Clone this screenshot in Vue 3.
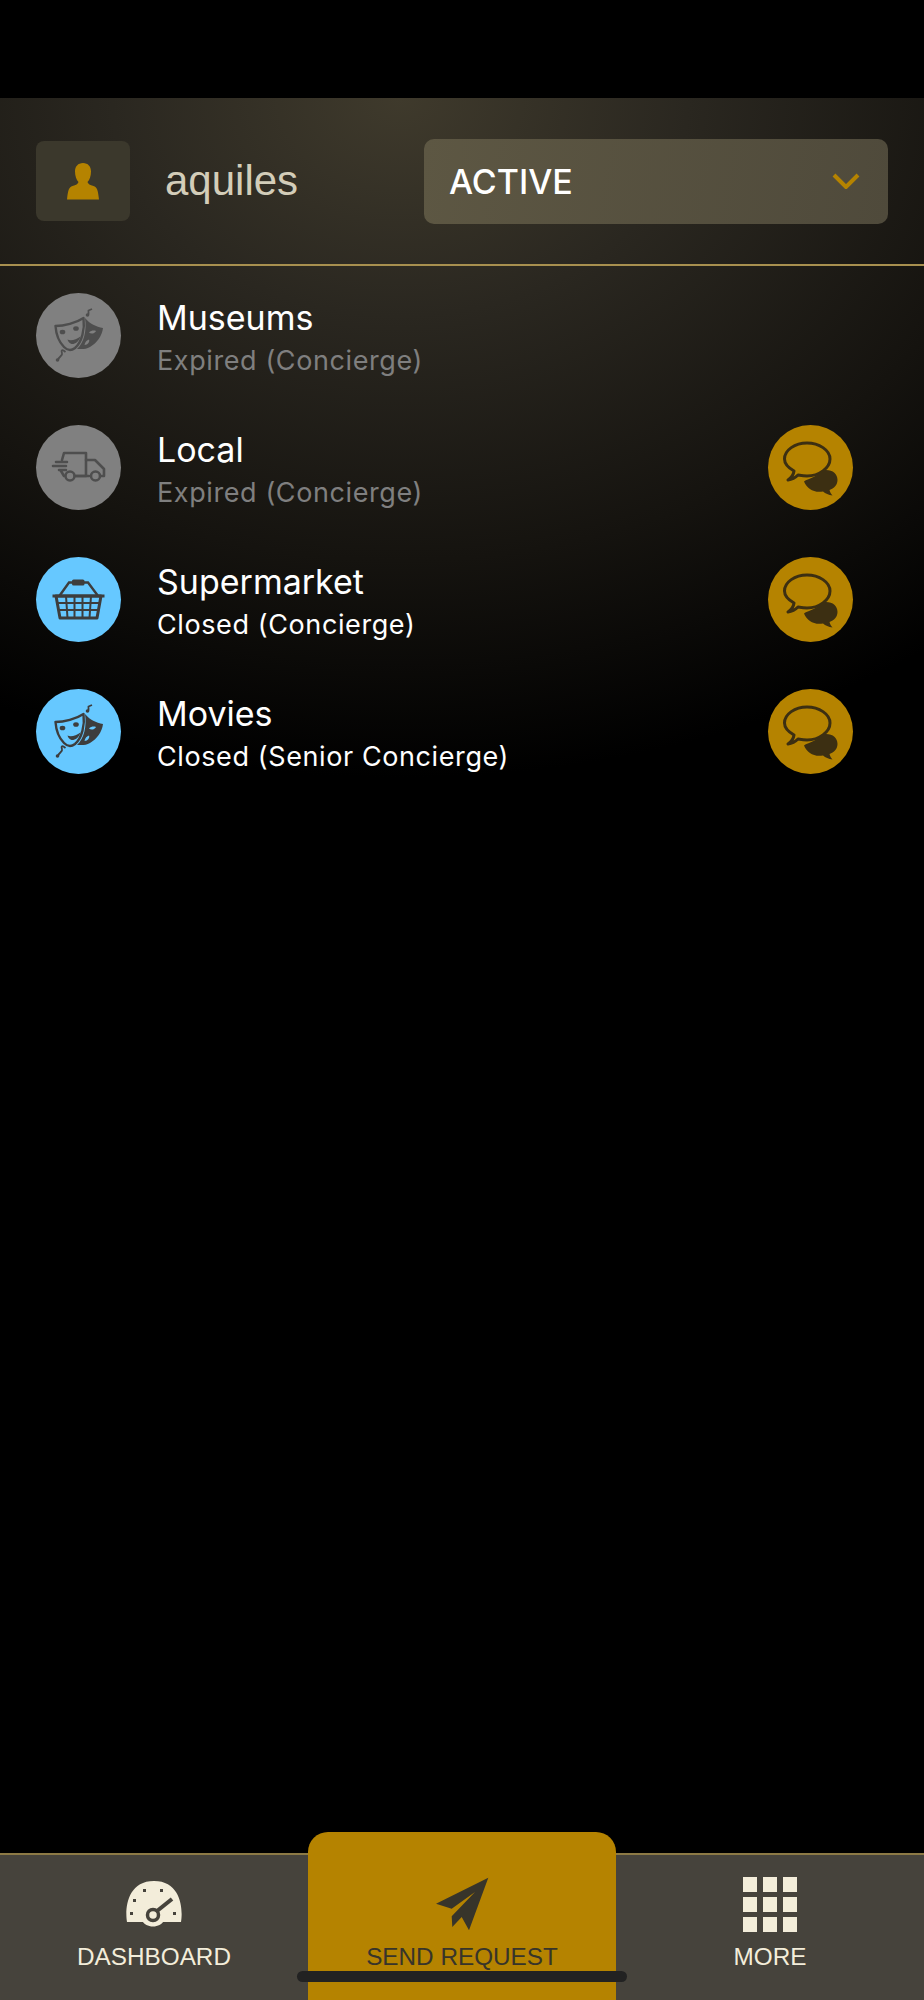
<template>
  <div class="screen">
    <svg class="defs" width="0" height="0" aria-hidden="true">
      <defs>
        <symbol id="ic-masks" viewBox="0 0 85 85">
          <path d="M19.500 33C28 33 40 30 47.500 25C49 36 46 49 39 55C35 58 31 57 28 54C22 48 20 40 19.500 33Z" fill="none" stroke="currentColor" stroke-width="2.400" stroke-linejoin="round" />
          <ellipse cx="26.500" cy="39" rx="2.800" ry="2.300" fill="currentColor" />
          <ellipse cx="40" cy="35.500" rx="2.800" ry="2.300" fill="currentColor" />
          <path d="M31.500 46.500C34.500 48 40 47 44.500 43.500C43 49 38.500 51.500 35.500 51C33.500 50.500 32 48.500 31.500 46.500Z" fill="currentColor" />
          <path fill-rule="evenodd" fill="currentColor" d="M49 25C54 31 60 33.500 67 35C66 43 61 50 54 54C50 56.500 46 56 41 56C48 50 51 37 49 25ZM53 39.500C55 37.500 58 37 60 38C59 40.500 55 41.500 53 39.500ZM48.500 52C49 49 51 47 53 46.500C54 48.500 52 52 48.500 52Z" />
          <path d="M52.500 21.500V17.500L56 16" fill="none" stroke="currentColor" stroke-width="1.800" />
          <circle cx="51.500" cy="22" r="1.800" fill="currentColor" />
          <path d="M22 67C23 63 27 63 26 60C25 57 26 56 29.500 59" fill="none" stroke="currentColor" stroke-width="1.800" />
          <circle cx="21.500" cy="67" r="1.800" fill="currentColor" />
        </symbol>
        <symbol id="ic-truck" viewBox="0 0 85 85">
          <g fill="none" stroke="currentColor" stroke-width="2.600" stroke-linejoin="round" stroke-linecap="round">
            <path d="M26 35L28 28H50V51H39" />
            <path d="M28 51L25 46" />
            <path d="M50 35H59L68 44V51H65" />
            <path d="M53 51H40" />
            <path d="M17 41H30M20 37H31M23 45H30" />
            <circle cx="34" cy="51" r="4.500" />
            <circle cx="59.500" cy="51" r="4.500" />
          </g>
        </symbol>
        <symbol id="ic-basket" viewBox="0 0 85 85">
          <g fill="none" stroke="currentColor">
            <path d="M23.700 38.500L33 25.500H52L61.700 38.500" stroke-width="2.400" />
            <path d="M20 39H65L61 61H24Z" stroke-width="3" stroke-linejoin="round" />
            <path d="M16.500 39H68.500" stroke-width="3" />
            <path d="M21 46H64M22 53H63M30 39L31.500 61M38.500 39V61M46.500 39V61M55 39L53.500 61" stroke-width="2" />
          </g>
          <rect x="36" y="22.500" width="12.500" height="6" rx="1.600" fill="currentColor" />
        </symbol>
        <symbol id="ic-chat" viewBox="0 0 85 85">
          <path d="M26 46C19 42 16.500 38 16.500 34C16.500 25 27 18 39 18C51 18 62 25 62 34C62 43 51 51 39 51C36 51 33 50.500 30 50C27 53 24 54.500 20 55C23 53 25.500 50 26 46Z" fill="none" stroke="currentColor" stroke-width="3" stroke-linejoin="round" />
          <path d="M36 56.500C39 54 47 53 52 47C54 45 56 45 58 45C65 45 69.500 49 69.500 55C69.500 60 66 63.500 61.500 65C62 67 63 69 64.500 70.500C60.500 70 57.500 68.500 55 66.500C46 68 39 64 36 56.500Z" fill="currentColor" />
        </symbol>
      </defs>
    </svg>

    <div class="status-bar"></div>

    <main class="main">
      <header class="top">
        <div class="avatar">
          <svg width="32" height="37" viewBox="0 0 32 37">
            <path fill="currentColor" d="M16 0C11 0 8 3.500 8 8.500C8 13 9.500 17 11.500 19C11 21 9 22 5.500 23C2 24 1 27 0 36.500H32C31 27 30 24 26.500 23C23 22 21 21 20.500 19C22.500 17 24 13 24 8.500C24 3.500 21 0 16 0Z" />
          </svg>
        </div>
        <span class="username">aquiles</span>
        <div class="select">
          <span>ACTIVE</span>
          <svg width="28" height="16" viewBox="0 0 28 16">
            <path d="M2 2L14 14L26 2" fill="none" stroke="currentColor" stroke-width="4" />
          </svg>
        </div>
      </header>

      <ul class="list">
        <li v-for="item in items" :key="item.name" class="row" :class="{ expired: item.expired }">
          <div class="circle">
            <svg width="85" height="85"><use :href="'#' + item.icon" /></svg>
          </div>
          <div class="info">
            <div class="name">{{ item.name }}</div>
            <div class="sub">{{ item.status }}</div>
          </div>
          <button v-if="item.chat" class="chat">
            <svg width="85" height="85"><use href="#ic-chat" /></svg>
          </button>
        </li>
      </ul>
    </main>

    <nav class="tabbar">
      <div class="tab">
        <svg class="tab-icon" width="56" height="46" viewBox="0 0 56 46">
          <path fill="currentColor" d="M1 41C-1 30 0 0 28 0C56 0 57 30 55 41L37 41C36 43 32 45.500 27 45.500C22 45.500 18 43 17 41Z" />
          <g fill="#46433c">
            <rect x="17" y="8" width="3" height="3" />
            <rect x="34" y="8" width="3" height="3" />
            <rect x="7" y="18" width="3" height="3" />
            <rect x="4" y="31" width="3" height="3" />
            <rect x="47" y="31" width="3" height="3" />
          </g>
          <circle cx="27" cy="34" r="5.500" fill="none" stroke="#46433c" stroke-width="3.500" />
          <path d="M31 30L46 18" stroke="#46433c" stroke-width="4" />
        </svg>
        <span>DASHBOARD</span>
      </div>
      <div class="tab send">
        <svg class="tab-icon" width="53" height="54" viewBox="0 0 53 54">
          <path fill="currentColor" d="M52.300 0.700L0 26.700L15.700 31.700L39 15L15.700 39.300L16.300 50L25.700 40L33 53.300Z" />
        </svg>
        <span>SEND REQUEST</span>
      </div>
      <div class="tab">
        <div class="tab-icon dots">
          <i v-for="n in 9" :key="n"></i>
        </div>
        <span>MORE</span>
      </div>
    </nav>

    <div class="home-bar"></div>
  </div>
</template>

<script setup>
const items = [
  { name: 'Museums', status: 'Expired (Concierge)', icon: 'ic-masks', expired: true, chat: false },
  { name: 'Local', status: 'Expired (Concierge)', icon: 'ic-truck', expired: true, chat: true },
  { name: 'Supermarket', status: 'Closed (Concierge)', icon: 'ic-basket', expired: false, chat: true },
  { name: 'Movies', status: 'Closed (Senior Concierge)', icon: 'ic-masks', expired: false, chat: true },
]
</script>

<style>
html, body { background: #000; }
</style>

<style scoped>
.screen {
  position: relative;
  display: flex;
  flex-direction: column;
  width: 924px;
  height: 2000px;
  overflow: hidden;
  background: #000;
  font-family: "Liberation Sans", Arial, sans-serif;
}
.defs { position: absolute; }
.status-bar { height: 98px; flex: none; }

.main {
  flex: 1;
  background:
    radial-gradient(ellipse 900px 680px at 400px 0, #3f3a2c, #2a2720 32%, #15130f 68%, #000 100%);
}

/* header */
.top {
  display: flex;
  align-items: center;
  height: 166px;
  padding: 0 36px;
  border-bottom: 2px solid #a8904f;
  box-sizing: content-box;
}
.avatar {
  display: flex;
  align-items: center;
  justify-content: center;
  width: 94px;
  height: 80px;
  flex: none;
  border-radius: 8px;
  background: #3b382c;
  color: #b58300;
}
.username {
  margin-left: 35px;
  font-size: 42px;
  color: #d3cdb9;
  flex: 1;
}
.select {
  display: flex;
  align-items: center;
  justify-content: space-between;
  width: 464px;
  height: 85px;
  padding: 0 28px 0 25px;
  box-sizing: border-box;
  border-radius: 10px;
  background: linear-gradient(100deg, #5d5743, #4f4a3b);
  color: #fff;
  font-family: Inter, sans-serif;
  font-weight: 500;
  font-size: 34px;
}
.select svg { color: #b58300; }

/* list */
.list {
  list-style: none;
  margin: 0;
  padding: 27px 36px 0;
  display: flex;
  flex-direction: column;
  gap: 47px;
}
.row {
  display: flex;
  align-items: center;
  height: 85px;
}
.circle {
  width: 85px;
  height: 85px;
  flex: none;
  border-radius: 50%;
  background: #66c8ff;
  color: #3d3d3d;
}
.circle svg, .chat svg { display: block; }
.info {
  flex: 1;
  margin-left: 36px;
  padding-top: 6px;
  font-family: Inter, sans-serif;
  color: #fff;
}
.name { font-size: 34px; line-height: 44px; }
.sub { font-size: 27px; line-height: 41px; letter-spacing: 0.6px; }
.row.expired .circle { background: #808080; color: #4e4e4e; }
.row.expired .sub { color: #7f7f7f; }
.chat {
  width: 85px;
  height: 85px;
  flex: none;
  padding: 0;
  border: 0;
  border-radius: 50%;
  background: #b58300;
  color: #3c2f12;
  margin-right: 35px;
}

/* tabs */
.tabbar {
  display: grid;
  grid-template-columns: repeat(3, 308px);
  height: 145px;
  flex: none;
  background: #46433c;
  border-top: 2px solid #8d7a45;
}
.tab {
  display: flex;
  flex-direction: column;
  align-items: center;
  padding-top: 22px;
  color: #f3edda;
  font-size: 24.300px;
}
.tab span { margin-top: 12px; line-height: 28px; }
.tab-icon { height: 54px; flex: none; }
.tab.send {
  margin-top: -23px;
  padding-top: 45px;
  border-radius: 20px 20px 0 0;
  background: #b58300;
  color: #37342a;
}
.dots {
  display: grid;
  grid-template-columns: repeat(3, 14px);
  grid-auto-rows: 15px;
  gap: 5px 6px;
  align-content: start;
}
.dots i { background: #f3edda; }

.home-bar {
  position: absolute;
  left: 297px;
  top: 1971px;
  width: 330px;
  height: 11px;
  border-radius: 6px;
  background: #222;
}
</style>
